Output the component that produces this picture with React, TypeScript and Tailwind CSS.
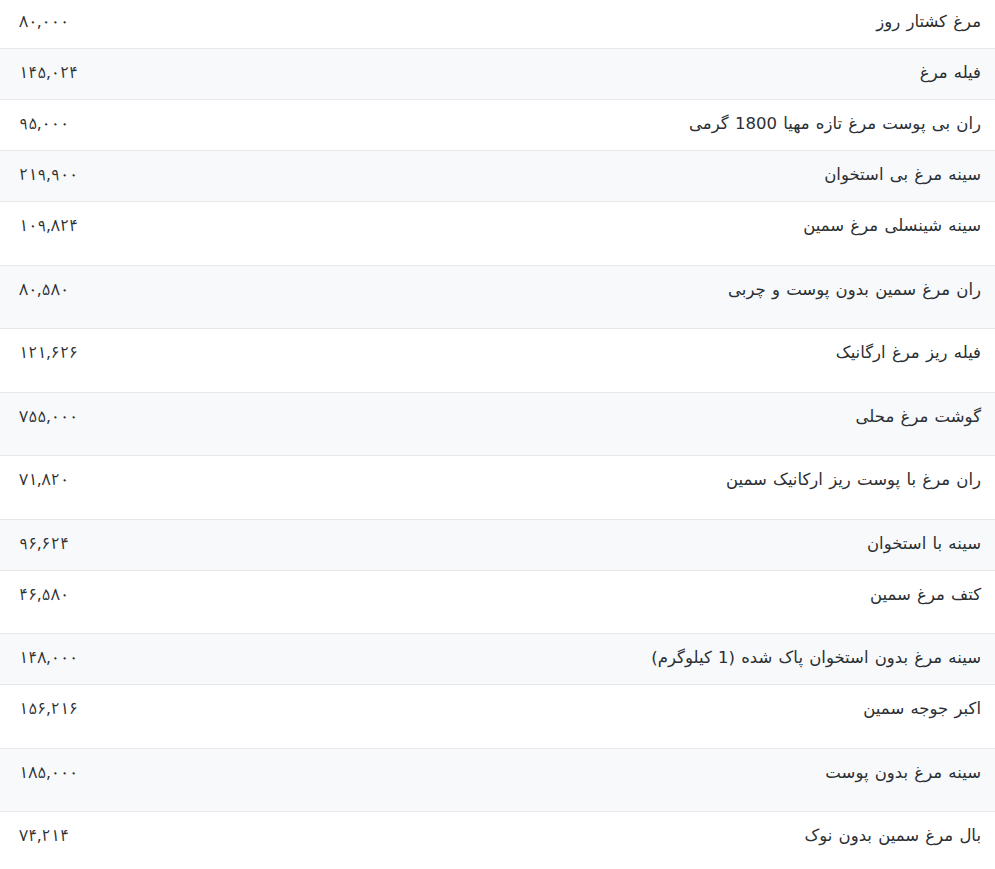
import React from 'react'

interface PriceRow {
  name: string
  price: string
  tall?: boolean
}

const rows: PriceRow[] = [
  { name: 'مرغ کشتار روز', price: '۸۰,۰۰۰' },
  { name: 'فیله مرغ', price: '۱۴۵,۰۲۴' },
  { name: 'ران بی پوست مرغ تازه مهیا 1800 گرمی', price: '۹۵,۰۰۰' },
  { name: 'سینه مرغ بی استخوان', price: '۲۱۹,۹۰۰' },
  { name: 'سینه شینسلی مرغ سمین', price: '۱۰۹,۸۲۴', tall: true },
  { name: 'ران مرغ سمین بدون پوست و چربی', price: '۸۰,۵۸۰', tall: true },
  { name: 'فیله ریز مرغ ارگانیک', price: '۱۲۱,۶۲۶', tall: true },
  { name: 'گوشت مرغ محلی', price: '۷۵۵,۰۰۰', tall: true },
  { name: 'ران مرغ با پوست ریز ارکانیک سمین', price: '۷۱,۸۲۰', tall: true },
  { name: 'سینه با استخوان', price: '۹۶,۶۲۴' },
  { name: 'کتف مرغ سمین', price: '۴۶,۵۸۰', tall: true },
  { name: 'سینه مرغ بدون استخوان پاک شده (1 کیلوگرم)', price: '۱۴۸,۰۰۰' },
  { name: 'اکبر جوجه سمین', price: '۱۵۶,۲۱۶', tall: true },
  { name: 'سینه مرغ بدون پوست', price: '۱۸۵,۰۰۰', tall: true },
  { name: 'بال مرغ سمین بدون نوک', price: '۷۴,۲۱۴', tall: true },
]

const App: React.FC = () => {
  return (
    <div
      dir="rtl"
      className="w-[995px] h-[869px] overflow-hidden bg-white text-[#2b2f33] text-[16px] leading-6 font-['Noto_Sans_Arabic','DejaVu_Sans',sans-serif]"
    >
      <div className="-mt-[2px]">
        {rows.map((row, i) => (
          <div
            key={i}
            className={
              'flex justify-between items-start border-b border-[#e5e7eb] pt-3 pr-[14px] pl-[19px] ' +
              (i % 2 === 1 ? 'bg-[#f8f9fa] ' : 'bg-white ') +
              (row.tall ? 'h-[63.5px]' : 'h-[51px]')
            }
          >
            <span className="font-['DejaVu_Sans',sans-serif] text-[16.5px] [word-spacing:1px]">{row.name}</span>
            <span>{row.price}</span>
          </div>
        ))}
      </div>
    </div>
  )
}

export default App
